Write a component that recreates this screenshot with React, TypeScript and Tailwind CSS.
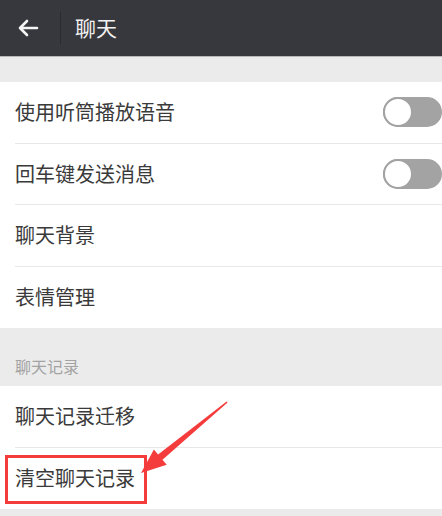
import React from "react";

const font = { fontFamily: '"Noto Sans CJK SC", "Noto Sans", sans-serif' };

function Toggle() {
  return (
    <div className="relative w-[59px] h-[30px] rounded-full bg-[#a3a3a3]">
      <div className="absolute left-0 top-0 w-[30px] h-[30px] rounded-full bg-white border-2 border-[#a3a3a3]" />
    </div>
  );
}

function Row({ label, toggle, last }: { label: string; toggle?: boolean; last?: boolean }) {
  return (
    <div className="pl-[15px]">
      <div className={`h-[61.5px] flex items-center justify-between ${last ? "" : "border-b border-[#e8e8e8]"}`}>
        <span className="text-[20px] text-[#3a3a3a]">{label}</span>
        {toggle && <Toggle />}
      </div>
    </div>
  );
}

export default function App() {
  return (
    <div className="relative w-[442px] h-[516px] overflow-hidden bg-[#ebebeb]" style={font}>
      <div className="h-[57px] bg-[#37383d] border-b border-[#b8b8b8] flex items-center">
        <div className="w-[60px] flex justify-center">
          <svg width="22" height="18" viewBox="0 0 22 18" className="ml-[-4px]">
            <path d="M20 9H3M10 2L3 9l7 7" stroke="#f4f4f4" strokeWidth="2.6" fill="none" strokeLinecap="round" strokeLinejoin="round" />
          </svg>
        </div>
        <div className="w-px h-[32px] bg-[#2a2b2f]" />
        <span className="ml-[14px] text-[21px] text-[#f2f2f2]">聊天</span>
      </div>

      <div className="h-[25px]" />

      <div className="bg-white">
        <Row label="使用听筒播放语音" toggle />
        <Row label="回车键发送消息" toggle />
        <Row label="聊天背景" />
        <Row label="表情管理" last />
      </div>

      <div className="h-[58px] flex items-center pl-[15px] pt-[18px]">
        <span className="text-[16px] text-[#a3a3a3]">聊天记录</span>
      </div>

      <div className="bg-white">
        <Row label="聊天记录迁移" />
        <Row label="清空聊天记录" last />
      </div>

      <div className="absolute left-[5px] top-[455px] w-[142px] h-[49px] border-[3px] border-[#f53c3c]" />
      <svg className="absolute left-0 top-0" width="442" height="516" viewBox="0 0 442 516">
        <polygon
          points="227.6,402.5 162.5,459.8 166.7,464.8 141,473 153.9,449.4 158.1,454.4 226.6,401.4"
          fill="#f53c3c"
        />
      </svg>
    </div>
  );
}
